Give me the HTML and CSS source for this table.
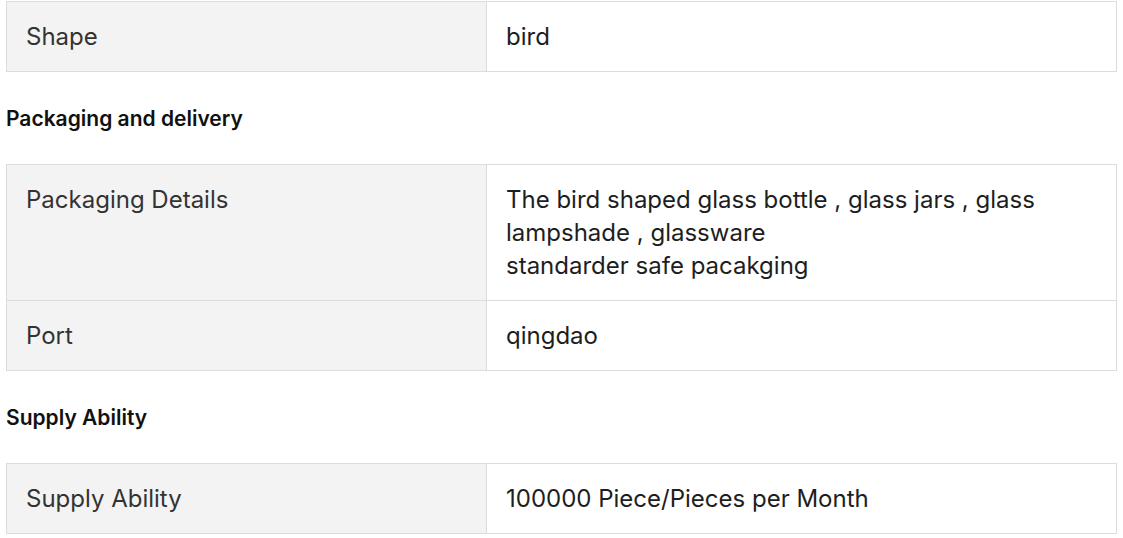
FILE: index.html
```html
<!DOCTYPE html>
<html lang="en">
<head>
<meta charset="utf-8">
<title>Specifications</title>
<link rel="stylesheet" href="styles.css">
</head>
<body>
<div class="page">
  <div class="spec">
    <div class="label">Shape</div>
    <div class="value">bird</div>
  </div>
  <h3 class="heading">Packaging and delivery</h3>
  <div class="spec">
    <div class="label">Packaging Details</div>
    <div class="value">The bird shaped glass bottle , glass jars , glass lampshade , glassware<br>standarder safe pacakging</div>
    <div class="label">Port</div>
    <div class="value">qingdao</div>
  </div>
  <h3 class="heading">Supply Ability</h3>
  <div class="spec">
    <div class="label">Supply Ability</div>
    <div class="value">100000 Piece/Pieces per Month</div>
  </div>
</div>
</body>
</html>
```
FILE: styles.css
```css
html, body {
  margin: 0;
  padding: 0;
  background: #ffffff;
}
.page {
  padding: 1px 6px 0 6px;
  font-family: Inter, "Noto Sans", "Liberation Sans", sans-serif;
}
.spec {
  display: grid;
  grid-template-columns: 480px 1fr;
  border-top: 1px solid #dcdcdc;
  border-left: 1px solid #dcdcdc;
}
.label, .value {
  font-size: 24px;
  line-height: 33px;
  padding: 18px 19px;
  border-right: 1px solid #dcdcdc;
  border-bottom: 1px solid #dcdcdc;
}
.label {
  background: #f3f3f3;
  color: #333333;
}
.value {
  background: #ffffff;
  color: #1e1e1e;
}
.heading {
  margin: 33px 0 31px 0;
  font-size: 21px;
  line-height: 28px;
  font-weight: 600;
  color: #111111;
}
```
